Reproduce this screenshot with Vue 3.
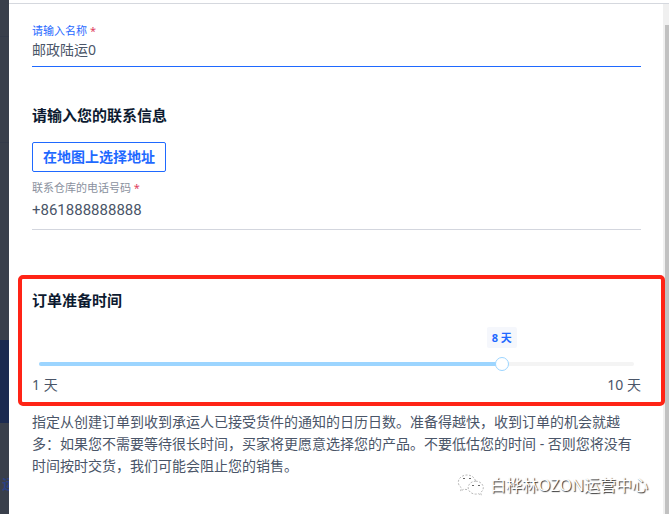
<script setup>
import { computed, ref } from 'vue'

const name = ref('邮政陆运0')
const phone = ref('+861888888888')
const days = ref(8)
const minDays = 1
const maxDays = 10

const position = computed(() => ((days.value - minDays) / (maxDays - minDays)) * 100 + '%')
</script>

<template>
  <div class="page">
    <div class="backdrop" aria-hidden="true">
      <div class="backdrop-top"></div>
      <div class="backdrop-active"></div>
      <div class="backdrop-link">运</div>
    </div>
    <div class="dialog">
      <div class="dialog-head"></div>
      <div class="dialog-body">
        <main class="content">
          <div class="field focused">
            <label for="name">请输入名称 <span class="required">*</span></label>
            <input id="name" v-model="name" type="text" />
          </div>

          <h2>请输入您的联系信息</h2>
          <button type="button" class="map-button">在地图上选择地址</button>
          <div class="field phone">
            <label for="phone">联系仓库的电话号码 <span class="required">*</span></label>
            <input id="phone" v-model="phone" type="tel" />
          </div>

          <section class="prepare">
            <h2 id="prepare-title">订单准备时间</h2>
            <div class="bubble-row">
              <output class="bubble" for="days" :style="{ left: position }">{{ days }} 天</output>
            </div>
            <div class="slider">
              <div class="rail"><div class="fill" :style="{ width: position }"></div></div>
              <input
                id="days"
                v-model.number="days"
                type="range"
                :min="minDays"
                :max="maxDays"
                aria-labelledby="prepare-title"
              />
            </div>
            <div class="limits">
              <span>{{ minDays }} 天</span>
              <span>{{ maxDays }} 天</span>
            </div>
          </section>

          <p class="hint">
            指定从创建订单到收到承运人已接受货件的通知的日历日数。准备得越快，收到订单的机会就越多：如果您不需要等待很长时间，买家将更愿意选择您的产品。不要低估您的时间 - 否则您将没有时间按时交货，我们可能会阻止您的销售。
          </p>
        </main>
        <div class="scrollbar" aria-hidden="true"><div class="thumb"></div></div>
      </div>
    </div>

    <div class="watermark">
      <svg width="28" height="24" viewBox="0 0 28 24" fill="none" aria-hidden="true">
        <g stroke="#999" stroke-width="0.7" stroke-dasharray="2 1.500">
          <path d="M10 16.6c-1.200 0-2-.2-3-.5l-3.400 2 .9-3.200C2.400 13.400 1.300 11.500 1.300 9.300 1.300 5.200 5.200 2 10 2c4.300 0 7.900 2.600 8.500 6" />
          <path d="M18.700 8.200c4.200 0 7.600 2.900 7.600 6.500 0 2-1.100 3.700-2.700 4.900l.7 2.600-2.900-1.500c-.9.300-1.700.4-2.700.4-4.200 0-7.500-2.800-7.500-6.400s3.300-6.500 7.500-6.500z" />
        </g>
        <g fill="#666">
          <rect x="6" y="5" width="2" height="1" />
          <rect x="12" y="5" width="2" height="1" />
          <rect x="15" y="12" width="2" height="1" />
          <rect x="21" y="12" width="2" height="1" />
        </g>
      </svg>
      <span>白桦林OZON运营中心</span>
    </div>
  </div>
</template>

<style>
body {
  margin: 0;
}
</style>

<style scoped>
.page {
  position: relative;
  display: flex;
  min-height: 100vh;
  overflow: hidden;
  background: #fff;
  color: #4a5568;
  font-family: "Noto Sans", "Noto Sans CJK SC", sans-serif;
  font-size: 14px;
}

.backdrop {
  display: flex;
  flex-direction: column;
  flex: 0 0 9px;
  overflow: hidden;
  background: #393f4b;
}

.backdrop-top {
  height: 340px;
  background: linear-gradient(#343b4a, #343b4a) 0 36px / 100% 1px no-repeat,
    linear-gradient(#343b4a, #343b4a) 0 142px / 100% 1px no-repeat;
}

.backdrop-active {
  height: 83px;
  background: #1b2a50;
}

.backdrop-link {
  margin: 50px 0 0 2px;
  color: #2a4184;
  font-weight: 700;
  line-height: 22px;
}

.dialog {
  display: flex;
  flex: 1;
  flex-direction: column;
  min-width: 0;
}

.dialog-head {
  height: 3px;
  border-bottom: 1px solid #d5d8de;
}

.dialog-body {
  display: flex;
  flex: 1;
}

.content {
  flex: 1;
  min-width: 0;
  padding: 19px 22px 20px 23px;
}

.scrollbar {
  display: flex;
  flex: 0 0 6px;
  box-sizing: border-box;
  padding: 21px 0 0 2px;
  background: #f0f0f0;
}

.thumb {
  flex: 1;
  background: #c1c1c1;
}

.field {
  display: flex;
  flex-direction: column;
  padding-bottom: 8px;
  border-bottom: 1px solid #d3d6de;
}

.field label {
  color: #8a919e;
  font-size: 11px;
  line-height: 16px;
}

.field input {
  height: 22px;
  padding: 0;
  border: 0;
  outline: 0;
  background: none;
  color: #4a5568;
  font: inherit;
}

.focused {
  padding-bottom: 7px;
  border-color: #1f69ff;
}

.field.focused input {
  height: 20px;
}

.focused label {
  color: #1f69ff;
}

.field .required {
  color: #e0405e;
}

.phone {
  gap: 3px;
  margin-top: 8px;
}

.phone input {
  font-family: Roboto, sans-serif;
  font-size: 15px;
}

h2 {
  margin: 36px 0 15px;
  color: #0c1a30;
  font-size: 15px;
  font-weight: 700;
  line-height: 24px;
}

.map-button {
  display: block;
  height: 30px;
  padding: 0 10px 2px;
  border: 1px solid #1f69ff;
  border-radius: 2px;
  background: #fff;
  color: #1f69ff;
  font: inherit;
  font-weight: 700;
}

.prepare {
  position: relative;
  margin-top: 58px;
}

.prepare::after {
  position: absolute;
  z-index: 1;
  inset: -13px -24px -11px -14px;
  border: 4px solid #ff2416;
  border-radius: 5px;
  content: "";
  pointer-events: none;
}

.prepare h2 {
  margin: 0 0 15px;
}

.bubble-row {
  position: relative;
  height: 21px;
  margin: 0 7px 9px;
}

.bubble {
  position: absolute;
  padding: 0 5px;
  border-radius: 2px;
  background: #f5f7fc;
  color: #1f69ff;
  font-size: 11px;
  font-weight: 700;
  line-height: 21px;
  white-space: nowrap;
  transform: translateX(-50%);
}

.slider {
  display: grid;
  align-items: center;
  height: 14px;
}

.rail,
.slider input {
  grid-area: 1 / 1;
}

.rail {
  height: 4px;
  margin: 0 7px;
  border-radius: 2px;
  background: #f4f4f4;
}

.fill {
  height: 100%;
  border-radius: 2px;
  background: #9cd5ff;
}

.slider input {
  width: 100%;
  height: 14px;
  margin: 0;
  appearance: none;
  background: none;
}

.slider input::-webkit-slider-thumb {
  box-sizing: border-box;
  width: 14px;
  height: 14px;
  border: 1px solid #9cd5ff;
  border-radius: 50%;
  appearance: none;
  background: #fff;
}

.limits {
  display: flex;
  justify-content: space-between;
  margin-top: 4px;
  line-height: 20px;
}

.hint {
  margin: 16px 0 0;
  line-height: 22px;
}

.watermark {
  position: absolute;
  right: 21px;
  bottom: 17px;
  z-index: 2;
  display: flex;
  align-items: center;
  gap: 5px;
  color: #fff;
  font-size: 16px;
  line-height: 24px;
  text-shadow: 1px 1px 1px #333;
}
</style>
